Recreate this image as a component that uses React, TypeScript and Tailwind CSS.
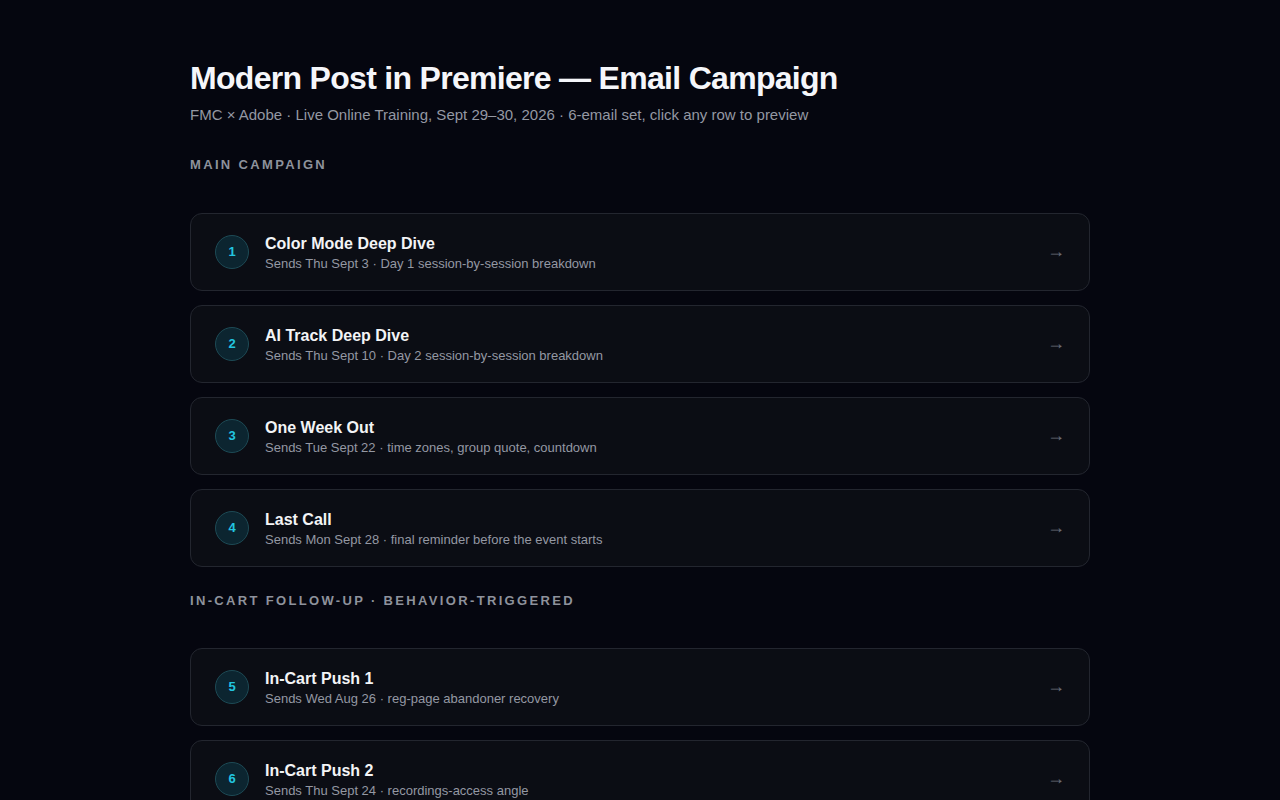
import React from "react";

const main = [
  { n: 1, t: "Color Mode Deep Dive", s: "Sends Thu Sept 3 · Day 1 session-by-session breakdown" },
  { n: 2, t: "AI Track Deep Dive", s: "Sends Thu Sept 10 · Day 2 session-by-session breakdown" },
  { n: 3, t: "One Week Out", s: "Sends Tue Sept 22 · time zones, group quote, countdown" },
  { n: 4, t: "Last Call", s: "Sends Mon Sept 28 · final reminder before the event starts" },
];
const cart = [
  { n: 5, t: "In-Cart Push 1", s: "Sends Wed Aug 26 · reg-page abandoner recovery" },
  { n: 6, t: "In-Cart Push 2", s: "Sends Thu Sept 24 · recordings-access angle" },
];

function Row({ n, t, s }: { n: number; t: string; s: string }) {
  return (
    <div className="flex items-center h-[78px] rounded-[12px] border border-[#23262f] bg-[#0b0d14] pl-6 pr-6 cursor-pointer">
      <div className="w-[34px] h-[34px] rounded-full border border-[#1d4a55] bg-[#0c2530] flex items-center justify-center text-[13px] font-bold text-[#22c5e0] shrink-0">
        {n}
      </div>
      <div className="ml-4 flex-1 pt-[2px]">
        <div className="text-[16px] leading-[20px] font-bold text-[#f3f4f6]">{t}</div>
        <div className="text-[13px] leading-[18px] text-[#9498a3] mt-[1px]">{s}</div>
      </div>
      <div className="text-[18px] leading-[20px] text-[#6b6f7a] pb-[2px]">→</div>
    </div>
  );
}

export default function App() {
  return (
    <div className="min-h-screen bg-[#05060f] font-['Liberation_Sans',Arial,sans-serif]">
      <div className="w-[900px] ml-[190px] pt-[59px]">
        <h1 className="text-[32px] leading-[38px] font-bold text-[#f5f6fa] tracking-[-0.7px]">
          Modern Post in Premiere — Email Campaign
        </h1>
        <p className="mt-[8px] text-[15px] leading-[20px] text-[#9498a3]">
          FMC × Adobe · Live Online Training, Sept 29–30, 2026 · 6-email set, click any row to preview
        </p>
        <div className="mt-[32px] text-[13px] leading-[16px] font-bold tracking-[0.18em] text-[#8e929c]">
          MAIN CAMPAIGN
        </div>
        <div className="mt-[40px] flex flex-col gap-[14px]">
          {main.map((r) => (
            <Row key={r.n} {...r} />
          ))}
        </div>
        <div className="mt-[26px] text-[13px] leading-[16px] font-bold tracking-[0.18em] text-[#8e929c]">
          IN-CART FOLLOW-UP · BEHAVIOR-TRIGGERED
        </div>
        <div className="mt-[39px] flex flex-col gap-[14px] pb-10">
          {cart.map((r) => (
            <Row key={r.n} {...r} />
          ))}
        </div>
      </div>
    </div>
  );
}
